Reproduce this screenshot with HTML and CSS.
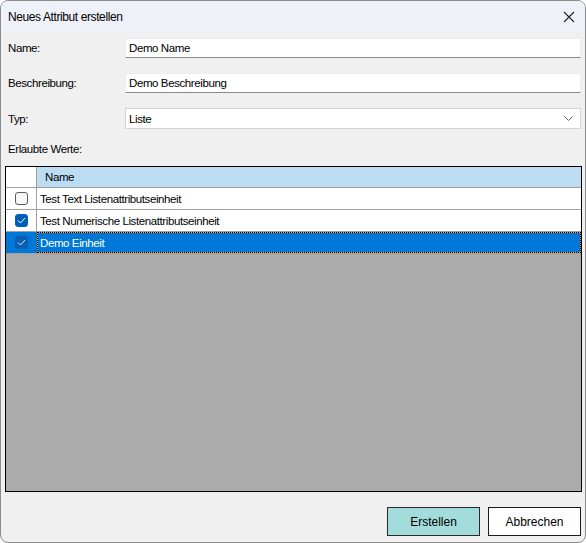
FILE: index.html
```html
<!DOCTYPE html>
<html lang="de">
<head>
  <meta charset="UTF-8" />
  <meta name="viewport" content="width=device-width, initial-scale=1.0"/>
  <title>Neues Attribut erstellen</title>
  <link rel="stylesheet" href="styles.css">
</head>
<body>
  <div class="window">
    <div class="titlebar">
      <span class="title">Neues Attribut erstellen</span>
      <svg class="close" width="12" height="12" viewBox="0 0 12 12">
        <path d="M1 1 L11 11 M11 1 L1 11" stroke="#222" stroke-width="1.1" fill="none"/>
      </svg>
    </div>

    <div class="dialog">
      <div class="field">
        <label>Name:</label>
        <input class="text-input" type="text" value="Demo Name" />
      </div>
      <div class="field">
        <label>Beschreibung:</label>
        <input class="text-input" type="text" value="Demo Beschreibung" />
      </div>
      <div class="field">
        <label>Typ:</label>
        <div class="combo">
          <span>Liste</span>
          <svg width="9" height="5" viewBox="0 0 9 5">
            <path d="M0.5 0.5 L4.5 4.5 L8.5 0.5" stroke="#666" stroke-width="1" fill="none"/>
          </svg>
        </div>
      </div>

      <div class="list-label">Erlaubte Werte:</div>

      <div class="grid">
        <div class="grid-row grid-head">
          <div class="cell cell-check"></div>
          <div class="cell cell-name">Name</div>
        </div>
        <div class="grid-row">
          <div class="cell cell-check"><span class="box"></span></div>
          <div class="cell cell-name">Test Text Listenattributseinheit</div>
        </div>
        <div class="grid-row">
          <div class="cell cell-check"><span class="box checked">
            <svg width="9" height="7" viewBox="0 0 9 7"><path d="M1 3.5 L3.5 6 L8 1" stroke="#fff" stroke-width="1" fill="none"/></svg>
          </span></div>
          <div class="cell cell-name">Test Numerische Listenattributseinheit</div>
        </div>
        <div class="grid-row selected">
          <div class="cell cell-check"><span class="box checked">
            <svg width="9" height="7" viewBox="0 0 9 7"><path d="M1 3.5 L3.5 6 L8 1" stroke="#cfe3f7" stroke-width="1" fill="none"/></svg>
          </span></div>
          <div class="cell cell-name focus">Demo Einheit</div>
        </div>
      </div>

      <div class="buttons">
        <button class="btn btn-primary">Erstellen</button>
        <button class="btn">Abbrechen</button>
      </div>
    </div>
  </div>
</body>
</html>
```

FILE: styles.css
```css
* { box-sizing: border-box; margin: 0; padding: 0; }
body {
  font-family: 'Liberation Sans', Arial, sans-serif;
  font-size: 11.5px;
  letter-spacing: -0.4px;
  color: #000;
  background: #fff;
}

.window {
  width: 586px;
  height: 543px;
  border: 1px solid #8c8c8c;
  border-radius: 8px;
  overflow: hidden;
  display: flex;
  flex-direction: column;
  background: #f0f0f0;
}

.titlebar {
  height: 31px;
  flex: none;
  background: #eef2f8;
  display: flex;
  align-items: center;
  justify-content: space-between;
  padding: 0 10px 0 7px;
  font-size: 12px;
}
.close { margin-top: 1px; }

.dialog {
  flex: 1;
  display: flex;
  flex-direction: column;
  padding: 6px 3px 6px 4px;
}

.field {
  display: flex;
  align-items: center;
  margin: 0 1px 15px 0;
}
.field label {
  width: 120px;
  padding-left: 3px;
  flex: none;
}
.text-input {
  flex: 1;
  height: 20px;
  font: inherit;
  letter-spacing: inherit;
  padding: 0 3px;
  background: #fff;
  border: 1px solid #ececec;
  border-bottom: 1px solid #8a8a8a;
  outline: none;
}
.combo {
  flex: 1;
  height: 21px;
  background: #fff;
  border: 1px solid #d4d4d4;
  display: flex;
  align-items: center;
  justify-content: space-between;
  padding: 0 7px 0 3px;
}

.list-label {
  padding-left: 3px;
  margin-top: -2px;
  margin-bottom: 10px;
  line-height: 14px;
}

.grid {
  flex: 1;
  border: 1px solid #000;
  background: #ababab;
}
.grid-row {
  display: flex;
  height: 22px;
  background: #fff;
  border-bottom: 1px solid #a0a0a0;
}
.grid-head {
  height: 21px;
}
.grid-head .cell-name {
  background: #bcdcf4;
  padding-left: 8px;
}
.cell {
  display: flex;
  align-items: center;
}
.cell-check {
  width: 31px;
  border-right: 1px solid #a0a0a0;
  justify-content: center;
}
.cell-name {
  flex: 1;
  padding-left: 3px;
}

.box {
  width: 13px;
  height: 13px;
  border: 1px solid #5c5c5c;
  border-radius: 3px;
  background: #f7f7f7;
  display: flex;
  align-items: center;
  justify-content: center;
  margin-left: 1px;
}
.box.checked {
  background: #005fb8;
  border-color: #005fb8;
}

.selected {
  background: #0078d7;
  color: #fff;
}
.selected .cell-check {
  border-right-color: #0078d7;
}
.selected .box.checked {
  background: #0a5fb4;
  border-color: #0a5fb4;
}
.focus {
  box-shadow: inset 0 0 0 1px #f0a040;
  outline: 1px dotted #000;
  outline-offset: -1px;
}

.buttons {
  display: flex;
  justify-content: flex-end;
  gap: 8px;
  margin: 15px 1px 0 0;
}
.btn {
  width: 93px;
  height: 29px;
  font: inherit;
  letter-spacing: 0;
  font-size: 12px;
  background: #fff;
  border: 1px solid #1a1a1a;
  color: #000;
}
.btn-primary {
  background: #a2dcdb;
  border-color: #2a2a2a;
}
```
